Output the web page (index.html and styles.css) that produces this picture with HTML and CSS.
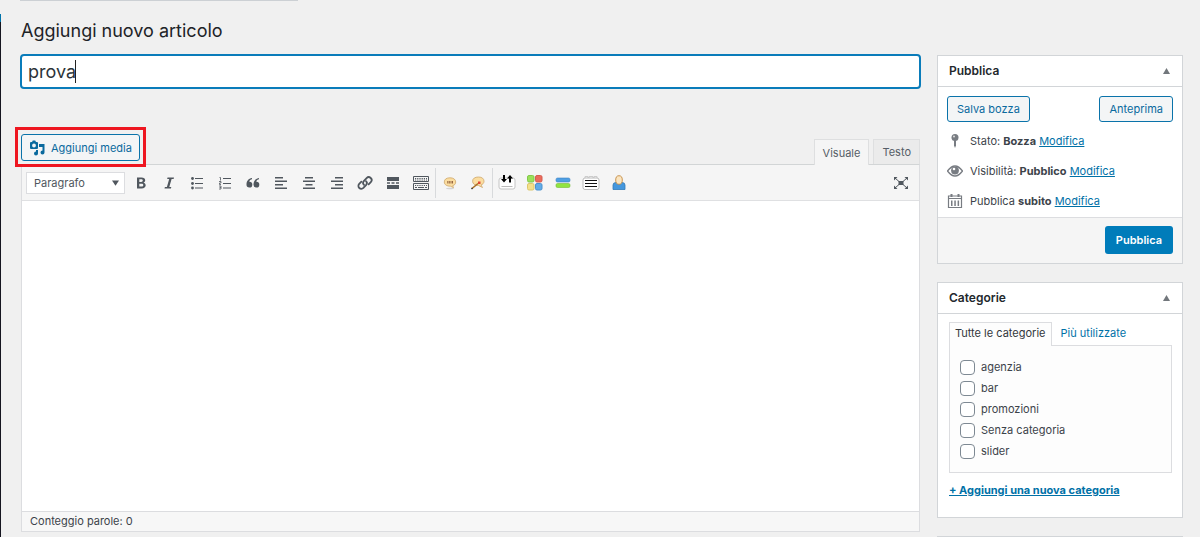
FILE: index.html
```html
<!DOCTYPE html>
<html lang="it">
<head>
<meta charset="utf-8">
<title>Aggiungi nuovo articolo</title>
<link rel="stylesheet" href="styles.css">
</head>
<body>
<div class="menu-edge"><span class="menu-current"></span></div>
<div class="page">
  <div class="notice-edge"></div>
  <h1 class="title">Aggiungi nuovo articolo</h1>
  <div class="columns">
    <main class="main">
      <div class="title-field">
        <input class="title-input" type="text" value="prova" aria-label="Titolo">
        <span class="caret"></span>
      </div>
      <section class="editor">
        <div class="editor-head">
          <div class="highlight">
            <button class="btn media-btn" type="button">
              <svg width="16" height="16" viewBox="0 0 16 16" fill="currentColor" aria-hidden="true"><path fill-rule="evenodd" d="M2 2h1l.8-1.500h2.400L7 2h1q1 0 1 1v5q0 1-1 1H2Q1 9 1 8V3q0-1 1-1zM5 3.600a1.900 1.900 0 1 0 0 3.800 1.900 1.900 0 0 0 0-3.800z"/><path d="M10 4h5.500v8.500a2 2 0 1 1-2-2V7H10zM7 10h2v3.500a2 2 0 1 1-2-2z"/></svg>
              Aggiungi media
            </button>
          </div>
          <div class="modes">
            <button class="mode mode-active" type="button">Visuale</button>
            <button class="mode" type="button">Testo</button>
          </div>
        </div>
        <div class="editor-box">
          <div class="toolbar">
            <div class="format">
              <select class="format-select" aria-label="Formato"><option>Paragrafo</option></select>
              <svg class="format-arrow" width="7" height="6" viewBox="0 0 8 6" aria-hidden="true"><path d="M0 0h8L4 6z" fill="#50575e"/></svg>
            </div>
            <div class="tools">
              <button class="tool" type="button" aria-label="Grassetto"><svg viewBox="0 0 16 16"><path fill-rule="evenodd" d="M4 2.500h4.500c2.300 0 3.700 1 3.700 2.800 0 1.200-.7 2-1.700 2.400 1.400.3 2.200 1.300 2.200 2.600 0 2-1.600 3.200-4 3.200H4zM6.300 4.300v2.600h1.900c1 0 1.600-.5 1.600-1.300S9.200 4.300 8.200 4.300zM6.300 8.700v2.900h2.200c1.100 0 1.800-.5 1.800-1.500s-.7-1.400-1.800-1.400z"/></svg></button>
              <button class="tool" type="button" aria-label="Corsivo"><svg viewBox="0 0 16 16"><path d="M6.500 2.500H13L12.600 4h-2l-2.300 8h2l-.4 1.500H3.500l.4-1.500h2l2.300-8h-2z"/></svg></button>
              <button class="tool" type="button" aria-label="Elenco puntato"><svg viewBox="0 0 16 16"><circle cx="3.500" cy="3.500" r="1.400"/><circle cx="3.500" cy="8.500" r="1.400"/><circle cx="3.500" cy="13" r="1.400"/><path d="M6 3h8v1H6zM6 8h8v1H6zM6 12.500h8v1H6z"/></svg></button>
              <button class="tool" type="button" aria-label="Elenco numerato"><svg viewBox="0 0 16 16"><path d="M6 3h8v1H6zM6 8h8v1H6zM6 12.500h8v1H6z"/><path d="M2.500 2.500h1v3M2 6.500h2v1.500H2.500v1.500H4M2 11h2v3H2M2.500 12.500H4" fill="none" stroke="currentColor" stroke-width=".8"/></svg></button>
              <button class="tool" type="button" aria-label="Citazione"><svg viewBox="0 0 16 16"><path d="M7 3C3.500 3.500 1.500 6 1.500 9.500a2.900 2.900 0 1 0 2.800-2.800C4.500 5.300 5.500 4.500 7 4.200zM14 3c-3.500.5-5.500 3-5.500 6.500a2.900 2.900 0 1 0 2.800-2.800c.2-1.400 1.200-2.200 2.700-2.500z"/></svg></button>
              <button class="tool" type="button" aria-label="Allinea a sinistra"><svg viewBox="0 0 16 16"><path d="M2 2h8v1.500H2zM2 5.500h12V7H2zM2 9h8v1.500H2zM2 12.500h12V14H2z"/></svg></button>
              <button class="tool" type="button" aria-label="Allinea al centro"><svg viewBox="0 0 16 16"><path d="M4 2h8v1.500H4zM2 5.500h12V7H2zM4.500 9h7v1.500h-7zM2 12.500h12V14H2z"/></svg></button>
              <button class="tool" type="button" aria-label="Allinea a destra"><svg viewBox="0 0 16 16"><path d="M6 2h8v1.500H6zM2 5.500h12V7H2zM6 9h8v1.500H6zM2 12.500h12V14H2z"/></svg></button>
              <button class="tool" type="button" aria-label="Inserisci link"><svg viewBox="0 0 16 16"><g fill="none" stroke="currentColor" stroke-width="1.800" stroke-linecap="round"><path d="M7 9.800a2.600 2.600 0 0 1-.2-3.600L9.600 3.100a2.800 2.800 0 0 1 4.200 4L11.600 9.400"/><path d="M9 6.200a2.600 2.600 0 0 1 .2 3.600l-2.800 3.100a2.800 2.800 0 0 1-4.200-4l2.200-2.300"/></g></svg></button>
              <button class="tool" type="button" aria-label="Leggi tutto"><svg viewBox="0 0 16 16"><path d="M2 2h12v4H2zM2 7.300h3v1.400H2zM6.500 7.300h3v1.400h-3zM11 7.300h3v1.400h-3zM2 10h12v4H2z"/></svg></button>
              <button class="tool" type="button" aria-label="Mostra barra strumenti"><svg viewBox="0 0 16 16"><path d="M.5 1.500h15v5H.5zM.5 8.500h15v6H.5z" fill="none" stroke="currentColor"/><path d="M2 3.500h12M2 5h12M2 10.500h12" stroke="currentColor" stroke-width="1" stroke-dasharray="1.200 1"/><path d="M2 12h2v1H2zM5 12h6v1H5zM12 12h2v1h-2z"/></svg></button>
            </div>
            <div class="tools tools-split">
              <button class="tool" type="button" aria-label="Citazione recensione"><svg viewBox="0 0 16 16"><ellipse cx="8" cy="13.500" rx="4" ry=".8" fill="#d4d4d4"/><path d="M8 2.800c3.500 0 5.700 1.700 5.700 4.200 0 2-1.300 3.200-3 3.700l.8 2-3-1.500C5 11.200 2.300 9.800 2.300 7S4.500 2.800 8 2.800z" fill="#fbdda0" stroke="#cda76c" stroke-width=".8"/><path d="M5.800 6v2.500M7.300 6v2.500M9 6v2.500M10.500 6v2.500" stroke="#8a5837" stroke-width=".9" fill="none"/></svg></button>
              <button class="tool" type="button" aria-label="Modifica citazione"><svg viewBox="0 0 16 16"><path d="M8.500 2C12 2 14 3.700 14 6.200c0 2-1.300 3.200-3 3.700l1.500 2.600-4-2C5 10.400 2.600 9 2.600 6.200S5 2 8.500 2z" fill="#fbdda0" stroke="#cda76c" stroke-width=".8"/><path d="M2 13.500 8 8.500" stroke="#a86f25" stroke-width="1.600"/><path d="M1.500 14l1-1" stroke="#333" stroke-width="1.500"/><path d="M8 6.500h2.500V9H8z" fill="#e04534"/></svg></button>
            </div>
            <div class="tools tools-split">
              <button class="tool" type="button" aria-label="Ordina"><svg class="wide" viewBox="0 0 18 16"><rect x="1" y="3" width="16" height="11" rx="2" fill="#fff" stroke="#c4c4c4"/><path d="M3.500 11.500h11" stroke="#bbb"/><path d="M5 0h2v4h2L6 7.500 3 4h2zM11 7.500h2v-4h2L12 0 9 3.500h2z" fill="#000"/></svg></button>
              <button class="tool" type="button" aria-label="Griglia"><svg viewBox="0 0 16 16"><rect x=".5" y=".5" width="6.500" height="6.500" rx="1.500" fill="#9be05a" stroke="#82c94a"/><rect x="8.500" y=".5" width="6.500" height="6.500" rx="1.500" fill="#ea6c5c" stroke="#d65c50"/><rect x=".5" y="8.500" width="6.500" height="6.500" rx="1.500" fill="#f3e08a" stroke="#dcc76c"/><rect x="8.500" y="8.500" width="6.500" height="6.500" rx="1.500" fill="#62abe6" stroke="#4a92cf"/></svg></button>
              <button class="tool" type="button" aria-label="Separatore"><svg viewBox="0 0 16 16"><rect x="1" y="3" width="14" height="4" rx="1.500" fill="#4f9fe3" stroke="#3c83c2" stroke-width=".6"/><rect x="1" y="8.500" width="14" height="4" rx="1.500" fill="#91e441" stroke="#72bb35" stroke-width=".6"/></svg></button>
              <button class="tool" type="button" aria-label="Schede"><svg class="wide" viewBox="0 0 18 16"><path d="M3 3V1.500h3V3m1 0V1.500h4V3m1 0V1.500h3V3" fill="#fff" stroke="#ccc"/><rect x="1" y="3" width="16" height="11.500" rx="2" fill="#fff" stroke="#bbb"/><path d="M3 5.500h12M3 8.500h12M3 11.500h12" stroke="#111" stroke-width="1.200"/></svg></button>
              <button class="tool" type="button" aria-label="Utente"><svg viewBox="0 0 16 16"><path d="M2 14.500V10q0-2.500 3-2.500h6q3 0 3 2.500v4.500z" fill="#4597dd" stroke="#327bb8" stroke-width=".8"/><ellipse cx="8" cy="5" rx="3.300" ry="4.300" fill="#fbe5c0" stroke="#c38b43" stroke-width=".9"/></svg></button>
            </div>
            <button class="tool tool-full" type="button" aria-label="Schermo intero"><svg viewBox="0 0 16 16"><path d="M5.500 6h5v4h-5zM1 2h3.500L1 5.500zM15 2v3.500L11.500 2zM1 14v-3.500L4.500 14zM15 14h-3.500l3.500-3.500z"/><path d="M2 3l4 3.500M14 3l-4 3.500M2 13l4-3.500M14 13l-4-3.500" stroke="currentColor"/></svg></button>
          </div>
          <div class="canvas" contenteditable="true" role="textbox" aria-label="Contenuto"></div>
          <div class="status">Conteggio parole: 0</div>
        </div>
      </section>
    </main>
    <aside class="side">
      <section class="panel">
        <div class="panel-head"><h2 class="panel-title">Pubblica</h2><button class="toggle" type="button" aria-label="Chiudi Pubblica"><svg width="7" height="6" viewBox="0 0 7 6"><path d="M3.500 0 7 6H0z" fill="currentColor"/></svg></button></div>
        <div class="publish">
          <div class="publish-actions"><button class="btn" type="button">Salva bozza</button><button class="btn" type="button">Anteprima</button></div>
          <div class="meta"><svg class="meta-icon" viewBox="0 0 16 16"><circle cx="8" cy="4.500" r="3.500"/><path d="M7 7h2v5.500L8 15l-1-2.500z"/><circle cx="7" cy="3.500" r="1" fill="#ddd"/></svg><span>Stato: <b>Bozza</b> <a href="#stato">Modifica</a></span></div>
          <div class="meta"><svg class="meta-icon" viewBox="0 0 16 16"><path d="M.5 8Q8-2 15.500 8 8 18 .5 8z" fill="none" stroke="currentColor" stroke-width="1.300"/><circle cx="8" cy="7.500" r="3.900"/><circle cx="7" cy="6" r="1.300" fill="#fff"/></svg><span>Visibilità: <b>Pubblico</b> <a href="#visibilita">Modifica</a></span></div>
          <div class="meta"><svg class="meta-icon" viewBox="0 0 16 16"><path d="M1.500 3h13v11.500h-13zM1.500 5.500h13" fill="none" stroke="currentColor" stroke-width="1.200"/><path d="M3.500 1h2v3h-2zM10.500 1h2v3h-2zM4 7.500h1.500V13H4zM7.300 7.500h1.500V13H7.300zM10.600 7.500h1.500V13h-1.500z"/></svg><span>Pubblica <b>subito</b> <a href="#data">Modifica</a></span></div>
        </div>
        <div class="publish-foot"><button class="primary" type="button">Pubblica</button></div>
      </section>
      <section class="panel">
        <div class="panel-head"><h2 class="panel-title">Categorie</h2><button class="toggle" type="button" aria-label="Chiudi Categorie"><svg width="7" height="6" viewBox="0 0 7 6"><path d="M3.500 0 7 6H0z" fill="currentColor"/></svg></button></div>
        <div class="cats">
          <div class="cat-tabs"><a class="cat-tab cat-tab-active" href="#tutte">Tutte le categorie</a><a class="cat-tab" href="#usate">Più utilizzate</a></div>
          <div class="cat-list">
            <label class="cat"><input class="check" type="checkbox">agenzia</label>
            <label class="cat"><input class="check" type="checkbox">bar</label>
            <label class="cat"><input class="check" type="checkbox">promozioni</label>
            <label class="cat"><input class="check" type="checkbox">Senza categoria</label>
            <label class="cat"><input class="check" type="checkbox">slider</label>
          </div>
          <a class="add-cat" href="#nuova">+ Aggiungi una nuova categoria</a>
        </div>
      </section>
      <section class="panel panel-next"></section>
    </aside>
  </div>
</div>
</body>
</html>
```
FILE: styles.css
```css
* { box-sizing: border-box; }
body {
  margin: 0;
  height: 100vh;
  overflow: hidden;
  display: flex;
  background: #f0f0f0;
  color: #3c434a;
  font: 11px/16px Inter, "Liberation Sans", sans-serif;
}
button, input, select { font: inherit; color: inherit; margin: 0; }
button { cursor: pointer; }
a { color: #0071a7; }
b { font-weight: 700; }

.menu-edge { width: 1px; padding-top: 14px; background: linear-gradient(#f0f0f0 14px, #15151f 14px); }
.menu-current { display: block; height: 8px; background: #0073aa; }
.page { flex: 1; min-width: 0; padding: 0 17px 0 19px; }
.notice-edge { width: 278px; height: 1px; background: #ccd0d4; }
.title { margin: 16px 1px 9px; font-size: 18px; line-height: 28px; font-weight: 400; color: #1d2327; }
.columns { display: flex; gap: 16px; align-items: flex-start; }
.main { flex: 1; min-width: 0; }

.title-field { position: relative; display: flex; }
.title-input {
  flex: 1; min-width: 0; height: 35px; padding: 0 6px;
  border: 2px solid #0a7cba; border-radius: 4px;
  background: #fff; color: #2c3338; font-size: 18px; outline: 0;
}
.caret { position: absolute; left: 55px; top: 6px; width: 1px; height: 23px; background: #222; }

.editor { margin: 38px 1px 0; }
.editor-head { display: flex; justify-content: space-between; align-items: flex-end; }
.highlight { margin: 0 0 -3px -6px; padding: 4px 3px 3px; border: 3px solid #ee1620; position: relative; }
.btn {
  height: 26px; padding: 0 9px; display: flex; align-items: center; gap: 6px;
  border: 1px solid #0a73aa; border-radius: 3px; background: #f3f5f6; color: #0a6a9e;
}
.media-btn { height: 27px; padding: 0 7px; }
.modes { display: flex; gap: 4px; }
.mode { height: 25px; padding: 0 8px; border: 1px solid #dedfe0; border-bottom: 0; background: #ebebeb; color: #555d66; }
.mode-active { background: #f5f5f5; margin-bottom: -1px; height: 26px; position: relative; }
.editor-box { border: 1px solid #dcdde0; border-top-color: #d2d5d6; }
.toolbar { display: flex; align-items: center; height: 36px; padding: 0 4px; background: #f5f5f5; border-bottom: 1px solid #dfe0e2; }
.format { display: grid; align-items: center; width: 99px; margin-right: 2px; }
.format > * { grid-area: 1 / 1; }
.format-select { appearance: none; width: 100%; height: 22px; padding: 0 7px; border: 1px solid #dcdde0; border-radius: 0; background: #fff; color: #50575e; }
.format-arrow { justify-self: end; margin-right: 6px; pointer-events: none; }
.tools { display: flex; align-items: center; height: 30px; }
.tools-split { border-left: 1px solid #d8dadc; }
.tool { width: 28px; height: 28px; padding: 0; border: 0; background: none; display: grid; place-items: center; color: #50575e; }
.tool svg { width: 16px; height: 16px; fill: currentColor; }
.tool svg.wide { width: 18px; }
.tool-full { margin-left: auto; }
.canvas { height: 310px; background: #fff; outline: 0; }
.status { padding: 1px 8px 2px; border-top: 1px solid #dcdde0; background: #f7f7f7; }

.side { width: 246px; padding-top: 1px; display: grid; gap: 18px; }
.panel { border: 1px solid #d2d5d8; background: #fff; }
.panel-next { height: 80px; }
.panel-head { display: flex; align-items: center; justify-content: space-between; height: 31px; padding: 0 12px 0 11px; border-bottom: 1px solid #d2d5d8; }
.panel-title { margin: 0; font-size: 12px; font-weight: 600; color: #23282d; }
.toggle { padding: 0; border: 0; background: none; color: #72777c; line-height: 0; }
.publish { padding: 9px 9px 8px; }
.publish-actions { display: flex; justify-content: space-between; margin-bottom: 11px; }
.meta { display: flex; align-items: center; gap: 7px; }
.meta + .meta { margin-top: 14px; }
.meta-icon { width: 16px; height: 16px; color: #787c82; fill: currentColor; }
.publish-foot { display: flex; justify-content: flex-end; padding: 8px 9px 9px; background: #f5f5f5; border-top: 1px solid #dcdde0; }
.primary { height: 28px; padding: 0 11px; border: 0; border-radius: 3px; background: #007cba; color: #fff; font-weight: 600; }
.cats { padding: 8px 10px 19px 11px; }
.cat-tabs { display: flex; }
.cat-tab { padding: 3px 9px 4px; text-decoration: none; }
.cat-tab-active { padding: 2px 5px 5px; border: 1px solid #dcdde0; border-bottom: 0; margin-bottom: -1px; background: #fdfdfd; color: #32373c; position: relative; }
.cat-list { display: grid; gap: 5px; padding: 13px 10px; border: 1px solid #dcdde0; background: #fdfdfd; }
.cat { display: flex; align-items: center; gap: 6px; }
.check { appearance: none; width: 15px; height: 15px; border: 1px solid #7e8993; border-radius: 4px; background: #fff; }
.check:checked { background: #007cba; }
.add-cat { display: block; margin-top: 9px; font-weight: 700; }
```
